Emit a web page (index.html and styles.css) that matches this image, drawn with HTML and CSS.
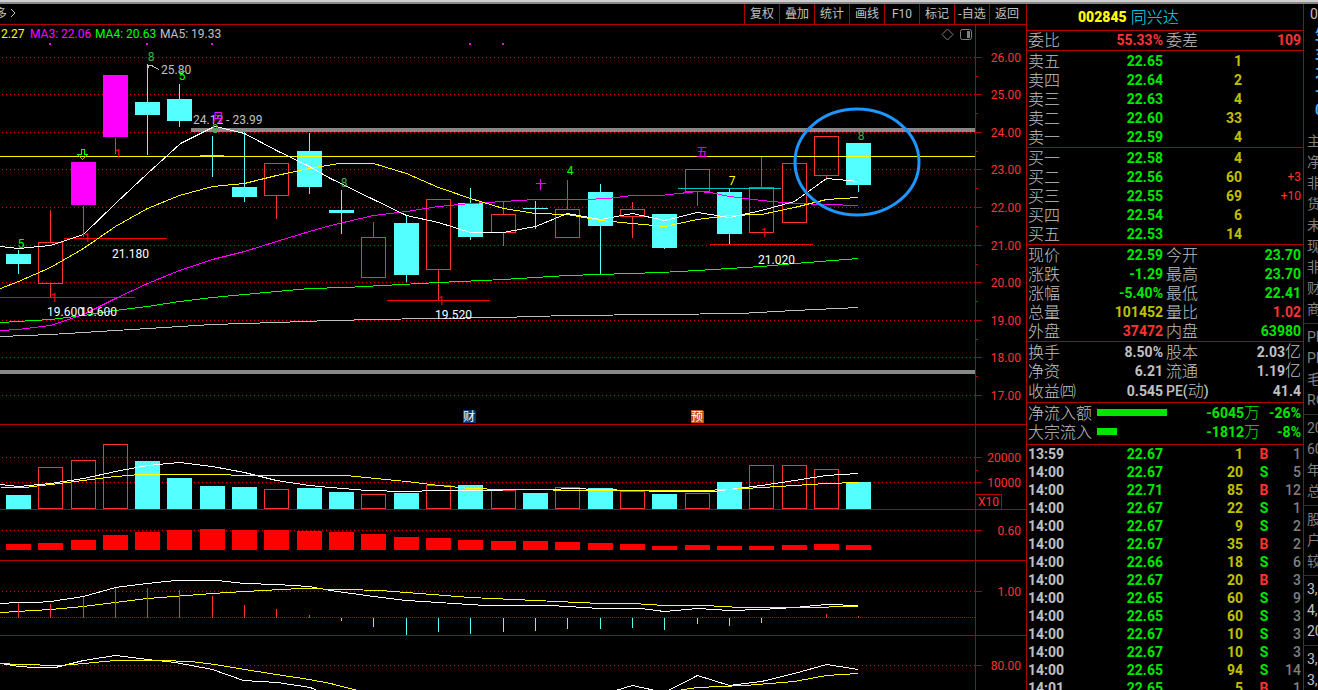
FILE: index.html
```html
<!DOCTYPE html>
<html lang="zh-CN">
<head>
<meta charset="utf-8">
<title>002845 同兴达</title>
<link rel="stylesheet" href="styles.css">
</head>
<body>
<div class="window-edge"></div>
<div class="app">
  <main class="charts">
    <nav class="toolbar">
      <button class="more">多 <svg width="6" height="10"><path d="M1 1l4 4-4 4" fill="none" stroke="#c0c0c0"/></svg></button>
      <div class="tools">
        <button>复权</button><button>叠加</button><button>统计</button><button>画线</button><button>F10</button><button>标记</button><button>-自选</button><button>返回</button>
      </div>
    </nav>

    <section class="panel price">
      <svg class="plot"><g transform="translate(0 -25)">
        <g class="grid">
          <line x1="2" x2="100%" y1="57.5" y2="57.5"/><line x1="2" x2="100%" y1="94.5" y2="94.5"/><line x1="2" x2="100%" y1="132.5" y2="132.5"/><line x1="2" x2="100%" y1="169.5" y2="169.5"/><line x1="2" x2="100%" y1="207.5" y2="207.5"/><line x1="2" x2="100%" y1="245.5" y2="245.5"/><line x1="2" x2="100%" y1="282.5" y2="282.5"/><line x1="2" x2="100%" y1="320.5" y2="320.5"/><line x1="2" x2="100%" y1="357.5" y2="357.5"/><line x1="2" x2="100%" y1="395.5" y2="395.5"/>
        </g>
        <line class="band" x1="191" x2="100%" y1="130" y2="130"/>
        <line class="band" x1="0" x2="100%" y1="372" y2="372"/>
        <text class="muted" x="161" y="74">25.80</text>
        <text class="muted" x="193" y="124">24.12 - 23.99</text>
        <g class="hollow" transform="translate(.5 .5)">
          <path d="M38 242h24v41h-24zM264 163h24v32h-24zM361 237h24v40h-24zM426 199h24v70h-24zM491 214h24v18h-24zM555 209h24v28h-24zM620 209h24v7h-24zM685 169h24v22h-24zM749 187h24v45h-24zM782 163h24v59h-24zM814 136h24v39h-24z"/>
          <path d="M50 209v33M50 283v14M83 205v31M115 137v16M276 195v23M373 221v16M438 269v31M503 201v13M503 232v13M567 179v30M632 201v8M632 216v21M697 191v14M761 155v32M826 175v4"/>
        </g>
        <path class="limit" d="M71 162h25v43h-25zM103 75h25v62h-25z"/>
        <path class="fall" d="M6 254h25v10h-25zM135 102h25v13h-25zM167 99h25v22h-25zM200 155h24v1h-24zM232 187h25v10h-25zM297 151h25v36h-25zM329 210h25v3h-25zM394 223h25v52h-25zM458 203h25v34h-25zM523 208h25v1h-25zM588 192h25v34h-25zM652 214h25v34h-25zM717 192h25v42h-25zM846 143h25v42h-25z"/>
        <path class="wick" transform="translate(.5)" d="M18 250v24M147 64v91M179 84v43M212 136v41M244 132v70M309 133v61M341 190v44M406 216v66M470 188v52M535 201v28M600 184v90M664 240v9M729 189v55M858 143v49"/>
        <line class="ma-yellow" x1="0" x2="100%" y1="156.5" y2="156.5"/>
        <g transform="translate(0 .5)">
          <path class="signal" d="M64 238H167M0 297H135M387 300H490M710 244H813"/>
          <path class="teal" d="M678 188H781"/>
        </g>
        <g transform="translate(.5 .5)">
          <polyline class="ma-gray" points="0,336 50,334 115,330 212,324 276,322 330,320 425,318 500,317 567,315 660,314 740,313 794,310 858,307"/>
          <polyline class="ma-green" points="0,322 50,319 83,315 115,310 147,306 179,301 212,297 244,294 276,291 309,288 345,287 438,282 503,279 567,275 660,272 697,270 761,266 794,263 858,258"/>
          <polyline class="ma-magenta" points="0,330 18,329 50,325 83,314 115,298 147,283 179,270 212,259 244,251 276,241 309,231 330,225 373,215 406,211 438,206 470,203 503,201 535,199 585,199 607,198 632,195 660,195 697,191 710,192 729,196 761,200 794,203 826,204 858,205"/>
          <polyline class="ma-yellow" points="0,288 18,281 50,267 83,248 115,226 147,208 179,195 212,186 244,183 276,175 309,168 338,163 373,163 406,173 438,187 470,198 503,208 535,213 567,214 600,220 632,223 664,226 697,219 729,215 761,214 794,207 826,199 858,197"/>
          <polyline class="ma-white" points="0,246 18,248 50,245 83,234 115,203 147,173 180,143 212,127 215,126 244,133 276,150 309,166 330,178 373,199 406,215 438,222 470,232 503,232 535,226 567,213 600,219 632,213 664,220 697,212 729,217 761,210 794,201 826,178 858,181"/>
          <path class="ma-gray" d="M148 67v-2h4M150 65l9 4"/>
          <path class="ma-magenta" d="M535 183h10M540 178v11"/>
          <path class="arrow" d="M81 149h3v5h3l-5 5-5-5h4z"/>
        </g>
        <path class="limit" d="M49 43h2v2h-2zM146 43h2v2h-2zM211 43h2v2h-2zM469 43h2v2h-2zM502 43h2v2h-2z"/>
        <g class="mark">
          <text class="dim" x="151" y="61">8</text><text x="182" y="80">5</text><text class="dim" x="215" y="133">8</text><text x="21" y="248">5</text><text class="dim" x="344" y="187">8</text><text x="570" y="175">4</text><text class="yellow" x="732" y="185">7</text><text class="dim" x="861" y="140">8</text>
          <text class="magenta" x="218" y="122">月</text><text class="magenta" x="702" y="157">五</text>
          <text class="one" x="118" y="158">1</text><text class="one" x="87" y="242">1</text><text class="one" x="54" y="302">1</text><text class="one" x="441" y="305">1</text><text class="one" x="764" y="237">1</text>
        </g>
        <g class="white">
          <text x="112" y="258">21.180</text><text x="47" y="316">19.600</text><text x="80" y="316">19.600</text><text x="435" y="319">19.520</text><text x="758" y="264">21.020</text>
        </g>
        <g class="badge">
          <path fill="#003a70" d="M463 410h11l2 2v11h-13z"/><text x="469" y="421">财</text>
          <path fill="#c04a10" d="M691 410h11l2 2v11h-13z"/><text x="697" y="421">预</text>
        </g>
        <text class="yellow" x="1" y="38">2.27</text><text class="magenta" x="30" y="38">MA3: 22.06</text><text class="green" x="95" y="38">MA4: 20.63</text><text class="muted" x="160" y="38">MA5: 19.33</text>
        <ellipse class="callout" cx="857" cy="162" rx="62" ry="53"/>
        <path class="icon" d="M942 34.500l5.500-5.500 5.500 5.500-5.500 5.500z"/>
        <rect class="icon" x="960.500" y="29.500" width="11" height="10" rx="2"/><path fill="#808080" d="M967 31h3v7h-3z"/>
      </g></svg>
      <svg class="axis"><g transform="translate(0 -25)">
        <path d="M0 57.500h6M0 94.500h6M0 132.500h6M0 169.500h6M0 207.500h6M0 245.500h6M0 282.500h6M0 320.500h6M0 357.500h6M0 395.500h6M0 76.500h2M0 113.500h2M0 151.500h2M0 188.500h2M0 226.500h2M0 264.500h2M0 301.500h2M0 339.500h2M0 376.500h2"/>
        <text x="45" y="62">26.00</text><text x="45" y="99">25.00</text><text x="45" y="137">24.00</text><text x="45" y="174">23.00</text><text x="45" y="212">22.00</text><text x="45" y="250">21.00</text><text x="45" y="287">20.00</text><text x="45" y="325">19.00</text><text x="45" y="362">18.00</text><text x="45" y="400">17.00</text>
      </g></svg>
    </section>

    <section class="panel volume">
      <svg class="plot"><g transform="translate(0 -425)">
        <g class="grid"><line x1="2" x2="100%" y1="457.5" y2="457.5"/><line x1="2" x2="100%" y1="482.5" y2="482.5"/></g>
        <path class="fall" d="M6 495h25v14h-25zM135 461h25v48h-25zM167 478h25v31h-25zM200 486h25v23h-25zM232 487h25v22h-25zM297 488h25v21h-25zM329 492h25v17h-25zM394 493h25v16h-25zM458 485h25v24h-25zM523 493h25v16h-25zM588 488h25v21h-25zM652 494h25v15h-25zM717 482h25v27h-25zM846 482h25v27h-25z"/>
        <g transform="translate(.5 .5)">
          <path class="hollow" d="M38 467h24v41h-24zM71 460h24v48h-24zM103 444h24v64h-24zM264 489h24v19h-24zM361 494h24v14h-24zM426 485h24v23h-24zM491 490h24v18h-24zM555 487h24v21h-24zM620 491h24v17h-24zM685 493h24v15h-24zM749 465h24v43h-24zM782 465h24v43h-24zM814 469h24v39h-24z"/>
          <polyline class="ma-white" points="0,484 18,486 50,483 83,478 115,471 147,465 179,462 212,466 244,472 276,480 309,485 330,487 366,490 406,491 438,490 485,490 520,489 551,489 570,488 600,489 664,491 712,491 761,485 794,480 826,475 858,473"/>
          <polyline class="ma-yellow" points="0,487 24,487 50,484 83,480 115,476 140,474 220,474 240,475 345,475 406,481 438,485 470,488 503,489 600,490 700,490 729,489 761,487 794,485 826,483 858,482"/>
        </g>
      </g></svg>
      <svg class="axis"><g transform="translate(0 -425)">
        <path d="M0 457.500h6M0 482.500h6M0 470.500h2M0 494.500h25.500v15"/>
        <text x="45" y="462">20000</text><text x="45" y="487">10000</text><text x="23" y="506">X10</text>
      </g></svg>
    </section>

    <section class="panel turnover">
      <svg class="plot"><g transform="translate(0 -510)">
        <g class="grid"><line x1="2" x2="100%" y1="530.5" y2="530.5"/></g>
        <path class="red-bars" d="M6 544h25v6h-25zM38 543h25v7h-25zM71 540h25v10h-25zM103 535h25v15h-25zM135 532h25v18h-25zM167 530h25v20h-25zM200 529h25v21h-25zM232 530h25v20h-25zM264 530h25v20h-25zM297 531h25v19h-25zM329 532h25v18h-25zM361 534h25v16h-25zM394 537h25v13h-25zM426 538h25v12h-25zM458 540h25v10h-25zM491 541h25v9h-25zM523 541h25v9h-25zM555 542h25v8h-25zM588 543h25v7h-25zM620 544h25v6h-25zM652 546h25v4h-25zM685 545h25v5h-25zM717 546h25v4h-25zM749 546h25v4h-25zM782 545h25v5h-25zM814 544h25v6h-25zM846 545h25v5h-25z"/>
      </g></svg>
      <svg class="axis"><path d="M0 20.500h6"/><text x="45" y="25">0.60</text></svg>
    </section>

    <section class="panel macd">
      <svg class="plot"><g transform="translate(0 -561)">
        <g class="grid"><line x1="2" x2="100%" y1="591.5" y2="591.5"/><line class="zero" x1="0" x2="100%" y1="617.5" y2="617.5"/></g>
        <g transform="translate(.5 .5)">
          <polyline class="ma-white" points="0,603 18,602 35,602 50,601 83,596 115,587 147,583 175,580 217,580 244,583 276,584 309,586 330,590 373,596 406,600 438,602 485,605 550,605 600,608 640,608 664,611 697,608 729,610 761,609 794,607 826,604 858,605"/>
          <polyline class="ma-yellow" points="0,612 50,609 83,606 147,598 212,593 244,591 300,588 345,589 380,590 406,592 470,597 535,600 600,603 632,603 664,605 705,605 740,607 800,607 858,606"/>
          <path class="hollow" d="M18 602v15M50 603v14M83 596v21M115 587v30M147 587v30M179 589v28M212 595v22M244 604v13M276 608v9M309 614v3M826 613v4M858 615v2"/>
          <path class="wick" d="M341 617v3M373 617v9M406 617v17M438 617v14M470 617v16M503 617v14M535 617v13M567 617v11M600 617v11M632 617v10M664 617v12M697 617v6M729 617v8M761 617v5"/>
        </g>
      </g></svg>
      <svg class="axis"><path d="M0 30.500h6"/><text x="45" y="35">1.00</text></svg>
    </section>

    <section class="panel kdj">
      <svg class="plot"><g transform="translate(0 -636)">
        <g class="grid"><line x1="2" x2="100%" y1="665.5" y2="665.5"/></g>
        <g transform="translate(.5 .5)">
          <polyline class="ma-white" points="0,663 18,666 35,667 55,667 83,660 115,655 147,659 175,662 212,669 243,680 277,682 310,687 325,694"/>
          <polyline class="ma-white" points="605,693 632,685 664,692 697,675 729,685 761,681 794,673 826,664 858,669"/>
          <polyline class="ma-yellow" points="0,663 18,664 60,665 83,663 115,660 160,660 190,661 215,664 244,669 276,674 309,679 330,683 365,692"/>
          <polyline class="ma-yellow" points="670,691 697,687 744,685 794,681 826,675 858,673"/>
        </g>
      </g></svg>
      <svg class="axis"><path d="M0 29.500h6"/><text x="45" y="34">80.00</text></svg>
    </section>
  </main>

  <aside class="quote">
    <header><b>002845</b><span>同兴达</span></header>
    <table class="stats ratio"><tr><th>委比</th><td class="up">55.33%</td><th>委差</th><td class="up">109</td></tr></table>
    <table class="book">
      <tr><th>卖五</th><td>22.65</td><td>1</td><td></td></tr>
      <tr><th>卖四</th><td>22.64</td><td>2</td><td></td></tr>
      <tr><th>卖三</th><td>22.63</td><td>4</td><td></td></tr>
      <tr><th>卖二</th><td>22.60</td><td>33</td><td></td></tr>
      <tr><th>卖一</th><td>22.59</td><td>4</td><td></td></tr>
    </table>
    <table class="book">
      <tr><th>买一</th><td>22.58</td><td>4</td><td></td></tr>
      <tr><th>买二</th><td>22.56</td><td>60</td><td>+3</td></tr>
      <tr><th>买三</th><td>22.55</td><td>69</td><td>+10</td></tr>
      <tr><th>买四</th><td>22.54</td><td>6</td><td></td></tr>
      <tr><th>买五</th><td>22.53</td><td>14</td><td></td></tr>
    </table>
    <table class="stats">
      <tr><th>现价</th><td class="down">22.59</td><th>今开</th><td class="down">23.70</td></tr>
      <tr><th>涨跌</th><td class="down">-1.29</td><th>最高</th><td class="down">23.70</td></tr>
      <tr><th>涨幅</th><td class="down">-5.40%</td><th>最低</th><td class="down">22.41</td></tr>
      <tr><th>总量</th><td class="vol">101452</td><th>量比</th><td class="up">1.02</td></tr>
      <tr><th>外盘</th><td class="up">37472</td><th>内盘</th><td class="down">63980</td></tr>
    </table>
    <table class="stats basics">
      <tr><th>换手</th><td>8.50%</td><th>股本</th><td>2.03<i>亿</i></td></tr>
      <tr><th>净资</th><td>6.21</td><th>流通</th><td>1.19<i>亿</i></td></tr>
      <tr><th>收益㈣</th><td>0.545</td><th><b>PE(</b>动<b>)</b></th><td>41.4</td></tr>
    </table>
    <table class="flow">
      <tr><th>净流入额</th><td><span class="bar" style="width:70px"></span></td><td>-6045<i>万</i></td><td>-26%</td></tr>
      <tr><th>大宗流入</th><td><span class="bar" style="width:20px"></span></td><td>-1812<i>万</i></td><td>-8%</td></tr>
    </table>
    <table class="ticks">
      <tr><td>13:59</td><td>22.67</td><td>1</td><td class="up">B</td><td>1</td></tr>
      <tr><td>14:00</td><td>22.67</td><td>20</td><td class="down">S</td><td>5</td></tr>
      <tr><td>14:00</td><td>22.71</td><td>85</td><td class="up">B</td><td>12</td></tr>
      <tr><td>14:00</td><td>22.67</td><td>22</td><td class="down">S</td><td>1</td></tr>
      <tr><td>14:00</td><td>22.67</td><td>9</td><td class="down">S</td><td>2</td></tr>
      <tr><td>14:00</td><td>22.67</td><td>35</td><td class="up">B</td><td>2</td></tr>
      <tr><td>14:00</td><td>22.66</td><td>18</td><td class="down">S</td><td>6</td></tr>
      <tr><td>14:00</td><td>22.67</td><td>20</td><td class="up">B</td><td>3</td></tr>
      <tr><td>14:00</td><td>22.65</td><td>60</td><td class="down">S</td><td>9</td></tr>
      <tr><td>14:00</td><td>22.65</td><td>60</td><td class="down">S</td><td>3</td></tr>
      <tr><td>14:00</td><td>22.67</td><td>10</td><td class="down">S</td><td>3</td></tr>
      <tr><td>14:00</td><td>22.67</td><td>10</td><td class="down">S</td><td>3</td></tr>
      <tr><td>14:00</td><td>22.65</td><td>94</td><td class="down">S</td><td>14</td></tr>
      <tr><td>14:01</td><td>22.65</td><td>5</td><td class="up">B</td><td>1</td></tr>
    </table>
  </aside>

  <aside class="side">
    <div class="side-code">0</div>
    <ul class="side-links"><li>生</li><li>主</li><li>之</li><li>-</li><li>0</li></ul>
    <ul><li>主</li><li>净</li><li>非</li><li>货</li><li>未</li><li>现</li><li>非</li><li>财</li><li>商</li></ul>
    <ul><li>PE</li><li>PE</li><li>毛</li><li>RO</li></ul>
    <ul><li>20</li><li>60</li><li>年</li><li>总</li></ul>
    <ul><li>股</li><li>户</li><li>较</li></ul>
    <ul class="bright"><li>3,</li><li>4,</li><li>20</li></ul>
    <ul class="bright"><li>3,</li><li>3,</li></ul>
  </aside>
</div>
</body>
</html>
```
FILE: styles.css
```css
* { box-sizing: border-box; }
body {
  margin: 0;
  height: 100vh;
  overflow: hidden;
  display: flex;
  flex-direction: column;
  background: #000;
  color: #c0c0c0;
  font: 12px/18px Roboto, "Noto Sans CJK SC", sans-serif;
}
.window-edge { flex: none; height: 4px; background: #cecece; border-bottom: 2px solid #888; }
.app { flex: 1; min-height: 0; display: grid; grid-template-columns: minmax(0, 1fr) 278px 14px; }

/* chart column */
.charts { display: flex; flex-direction: column; min-height: 0; overflow: hidden; }
.toolbar { flex: none; display: flex; justify-content: space-between; height: 21px; border-bottom: 1px solid #b00000; overflow: hidden; }
.toolbar button {
  padding: 1px 0 0;
  border: 0;
  background: none;
  color: #c0c0c0;
  font: 12px/19px Roboto, "Noto Sans CJK SC", sans-serif;
}
.toolbar .more { margin-left: -5px; }
.tools { display: flex; padding-right: 2px; }
.tools button { width: 35px; border-left: 1px solid #b00000; white-space: nowrap; }

.panel { flex: none; display: flex; border-bottom: 1px solid #b00000; }
.price { height: 400px; }
.volume { height: 85px; }
.turnover { height: 51px; }
.macd { height: 75px; }
.kdj { flex: 1; min-height: 0; border-bottom: 0; }
.plot { flex: 1; min-width: 0; height: 100%; shape-rendering: crispEdges; fill: none; overflow: hidden; }
.axis { flex: none; width: 51px; height: 100%; border-left: 1px solid #b00000; shape-rendering: crispEdges; }
.axis path { stroke: #b00000; fill: none; }
.axis text { fill: #ff3232; text-anchor: end; }

.grid line { stroke: #d00000; stroke-dasharray: 1 3; shape-rendering: auto; }
.grid .zero { stroke-dasharray: 1 1; }
.band { stroke: #888; stroke-width: 4; }
.hollow { stroke: #ff3232; }
.fall { fill: #54ffff; }
.wick { stroke: #54ffff; }
.limit { fill: #f0f; }
.signal { stroke: #f00; }
.teal { stroke: #00c0c0; }
.red-bars { fill: #f00; }
.ma-white { stroke: #fff; }
.ma-yellow { stroke: #ff0; }
.ma-magenta { stroke: #f0f; }
.ma-green { stroke: #0f0; }
.ma-gray { stroke: #c0c0c0; }
.arrow { stroke: #0f0; }
.callout { stroke: #1e96ff; stroke-width: 3; shape-rendering: auto; }
.icon { stroke: #808080; shape-rendering: auto; }
text.yellow { fill: #ff0; }
text.green { fill: #0f0; }
text.magenta { fill: #f0f; }
text.muted { fill: #c0c0c0; }
.white text { fill: #fff; }
.mark text { text-anchor: middle; fill: #0f0; }
.mark text.dim { fill: #48b048; }
.mark text.yellow { fill: #ff0; }
.mark text.magenta { fill: #f0f; }
.mark text.one { fill: #f00; }
.badge text { fill: #fff; text-anchor: middle; }

/* quote column */
.quote { border: solid #b00000; border-width: 0 1px; overflow: hidden; font: bold 14px/19px Roboto, "Noto Sans CJK SC", sans-serif; }
.quote header { display: flex; align-items: center; gap: 4px; height: 27px; padding-left: 51px; border-bottom: 1px solid #b00000; color: #ff0; }
.quote header span { color: #00e0ff; font-size: 16px; font-weight: 300; }
.quote table { display: table; width: 100%; table-layout: fixed; border-spacing: 0; padding-top: 1px; border-bottom: 1px solid #b00000; }
.quote tr { height: 19px; }
.quote th, .quote td { padding: 0; height: 19px; line-height: 19px; text-align: right; white-space: nowrap; }
.quote th { padding-left: 1px; text-align: left; font-size: 16px; font-weight: 300; }
.quote th b { font-weight: 500; font-size: 14px; }
.quote i { font-style: normal; font-weight: 300; font-size: 16px; line-height: 1; }
.quote .ratio { padding-top: 0; }
.quote .basics { padding-bottom: 1px; }
.quote .flow { padding-bottom: 2px; }
.quote .ticks { padding: 0; border: 0; }
.quote .ticks tr, .quote .ticks td { height: 18px; line-height: 18px; }
.quote .up { color: #ff3232; }
.quote .down { color: #00e600; }
.quote .vol { color: #c0c000; }

.stats th:first-child { width: 50px; }
.stats td:nth-child(2) { width: 86px; }
.quote .stats th:nth-child(3) { width: 50px; padding-left: 3px; }
.quote td:last-child { padding-right: 2px; }

.book th { width: 50px; }
.book td:nth-child(2) { width: 86px; color: #00e600; }
.book td:nth-child(3) { width: 79px; color: #c0c000; }
.book td:last-child { color: #ff3232; font-weight: 400; font-size: 12px; }

.flow th { width: 70px; }
.flow td { color: #00e600; }
.quote .flow td:nth-child(2) { width: 80px; text-align: left; }
.flow td:nth-child(3) { width: 83px; }
.bar { display: inline-block; height: 7px; background: #00e600; vertical-align: 2px; }

.quote .ticks td:first-child { width: 50px; padding-left: 1px; text-align: left; }
.ticks td:nth-child(2) { width: 86px; color: #00e600; }
.ticks td:nth-child(3) { width: 80px; color: #c0c000; }
.quote .ticks td:nth-child(4) { width: 42px; text-align: center; }
.ticks td:last-child { color: #808080; font-weight: 500; }

/* cut-off column at the window's right edge */
.side { overflow: hidden; color: #808080; font: 14px/21px Roboto, "Noto Sans CJK SC", sans-serif; }
.side ul { margin: 3px 0 0; padding: 3px 0 0 3px; border-top: 1px solid #333; list-style: none; white-space: nowrap; }
.side li { height: 21px; }
.side .side-code { height: 21px; padding-left: 6px; color: #c0c0c0; }
.side .side-links { margin: 0; padding: 0 0 0 11px; border: 0; color: #4ab4f0; }
.side .side-links li { height: 19px; line-height: 19px; font-weight: 700; }
.side .side-links + ul { padding-top: 8px; border: 0; }
.side .bright li { color: #c0c0c0; }
```
